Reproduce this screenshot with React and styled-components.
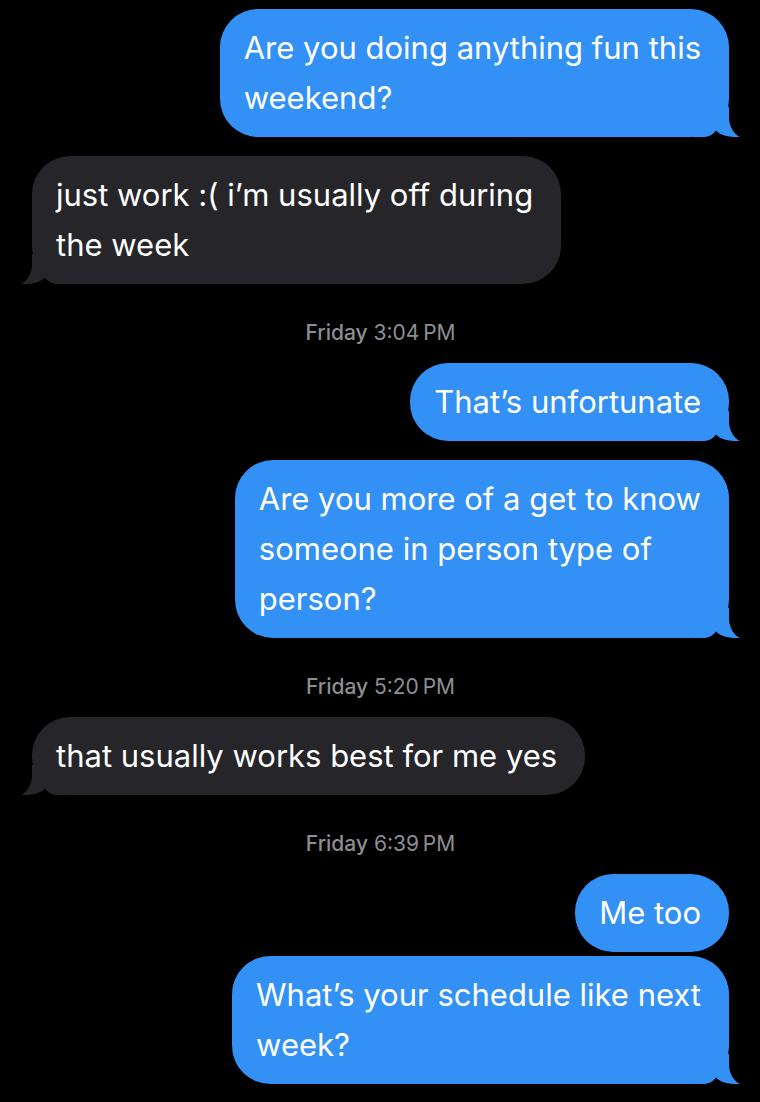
import React from 'react';
import styled, { createGlobalStyle } from 'styled-components';

const BLUE = '#3391f6';
const GRAY = '#262529';

const GlobalStyle = createGlobalStyle`
    html, body {
        margin: 0;
        padding: 0;
        background: #000;
    }
    body {
        font-family: Inter, "Noto Sans", sans-serif;
    }
`

const Thread = styled.main`
    display: flex;
    flex-direction: column;
    padding: 9px 31px 20px 32px;
    width: 760px;
    box-sizing: border-box;
    min-height: 1102px;
    background: #000;
`

const Row = styled.div`
    display: flex;
    justify-content: ${ props => props.$mine ? 'flex-end' : 'flex-start' };
    margin-top: ${ props => props.$gap }px;
`

const Bubble = styled.div`
    position: relative;
    isolation: isolate;
    padding: 14px 28px 14px 24px;
    border-radius: 38px;
    font-size: 31px;
    line-height: 50px;
    color: #fff;
    background: ${ props => props.$mine ? BLUE : GRAY };
    box-sizing: border-box;
`

const Line = styled.span`
    position: relative;
    z-index: 1;
    display: block;
    white-space: nowrap;
`

const Tail = styled.svg`
    position: absolute;
    z-index: 0;
    bottom: 0;
    width: 48px;
    height: 30px;
    ${ props => props.$mine ? 'right: -12px;' : 'left: -12px; transform: scaleX(-1);' }
`

const Stamp = styled.div`
    text-align: center;
    margin: 38px 0 0;
    font-size: 21px;
    line-height: 22px;
    color: #8e8e93;

    b {
        font-weight: 500;
    }
`

const messages = [
    { type: 'msg', mine: true, gap: 0, tail: true, lines: [ 'Are you doing anything fun this', 'weekend?' ] },
    { type: 'msg', mine: false, gap: 19, tail: true, lines: [ 'just work :( i’m usually off during', 'the week' ] },
    { type: 'stamp', day: 'Friday', time: '3:04\u2009PM' },
    { type: 'msg', mine: true, gap: 19, tail: true, lines: [ 'That’s unfortunate' ] },
    { type: 'msg', mine: true, gap: 19, tail: true, lines: [ 'Are you more of a get to know', 'someone in person type of', 'person?' ] },
    { type: 'stamp', day: 'Friday', time: '5:20\u2009PM' },
    { type: 'msg', mine: false, gap: 19, tail: true, lines: [ 'that usually works best for me yes' ] },
    { type: 'stamp', day: 'Friday', time: '6:39\u2009PM' },
    { type: 'msg', mine: true, gap: 19, tail: false, lines: [ 'Me too' ] },
    { type: 'msg', mine: true, gap: 4, tail: true, lines: [ 'What’s your schedule like next', 'week?' ] }
];

// tail covers the bubble's bottom corner; the notch stays open
const BubbleTail = ( { mine } ) => (
    <Tail $mine={mine} viewBox="0 0 48 30">
        <path d="M0 30 L10 30 C16 30 20 27.5 23 23.5 C27 28 35 30.5 47 30 C41 27 37 21 36 12 L36 0 L0 0 Z"
              fill={mine ? BLUE : GRAY} />
    </Tail>
);

const App = () => {
    return (
        <>
            <GlobalStyle />
            <Thread>
                {messages.map( ( item, index ) => {
                    if ( item.type === 'stamp' ) {
                        return (
                            <Stamp key={index}>
                                <b>{item.day}</b> {item.time}
                            </Stamp>
                        );
                    }
                    return (
                        <Row key={index} $mine={item.mine} $gap={item.gap}>
                            <Bubble $mine={item.mine}>
                                {item.tail && <BubbleTail mine={item.mine} />}
                                {item.lines.map( line => <Line key={line}>{line}</Line> )}
                            </Bubble>
                        </Row>
                    );
                } )}
            </Thread>
        </>
    );
};

export default App;
